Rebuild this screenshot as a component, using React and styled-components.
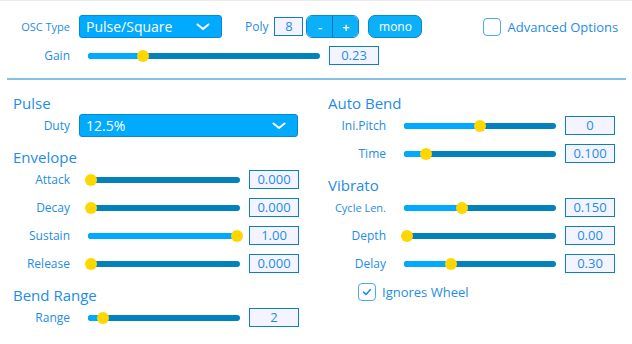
import styled, { createGlobalStyle } from "styled-components";

const GlobalStyle = createGlobalStyle`
  body {
    margin: 0;
    background: #fff;
    font-family: "Open Sans", "Noto Sans", sans-serif;
  }
`;

const BLUE = "#1e8ce8";

const Page = styled.div`
  width: 632px;
  height: 344px;
  box-sizing: border-box;
  border-top: 1px solid #ececec;
  background: #fff;
`;

const Top = styled.div`
  display: flex;
  flex-direction: column;
  gap: 6px;
  padding: 14px 0 0 13px;
`;

const Row = styled.div`
  display: flex;
  align-items: center;
  height: 23px;
  margin-left: ${(p) => p.$indent || 0}px;
`;

const Label = styled.div`
  width: ${(p) => p.$w}px;
  margin-right: ${(p) => p.$gap ?? 18}px;
  flex: none;
  text-align: right;
  font-size: ${(p) => p.$size || 12}px;
  color: ${BLUE};
  white-space: nowrap;
`;

const InlineLabel = styled.span`
  font-size: 12px;
  color: ${BLUE};
  margin: 0 6px 0 ${(p) => p.$left || 0}px;
`;

const Select = styled.div`
  display: flex;
  align-items: center;
  justify-content: space-between;
  width: ${(p) => p.$w}px;
  height: 23px;
  box-sizing: border-box;
  padding: 0 11px 0 6px;
  background: #00aaff;
  border: 1px solid #0b88cc;
  border-radius: 3px;
  color: #fff;
  font-size: 14px;
  flex: none;
`;

const ValueBox = styled.div`
  width: ${(p) => p.$w || 50}px;
  height: 19px;
  box-sizing: border-box;
  margin-left: ${(p) => p.$left ?? 9}px;
  border: 1px solid #0b7fc0;
  background: #f3f4ff;
  color: ${BLUE};
  font-size: 13px;
  line-height: 17px;
  text-align: center;
  flex: none;
`;

const BtnGroup = styled.div`
  display: flex;
  height: 23px;
  box-sizing: border-box;
  margin-left: 3px;
  border: 1px solid #0b88cc;
  border-radius: 6px;
  overflow: hidden;
`;

const GroupBtn = styled.div`
  width: 25px;
  display: flex;
  align-items: center;
  justify-content: center;
  background: #0cb0f8;
  color: #fff;
  font-size: 13px;
  font-weight: 600;
  & + & {
    border-left: 1px solid #0a72b0;
  }
`;

const Pill = styled.div`
  width: 54px;
  height: 23px;
  box-sizing: border-box;
  margin-left: 9px;
  display: flex;
  align-items: center;
  justify-content: center;
  background: #0cb0f8;
  border: 1px solid #0b88cc;
  border-radius: 7px;
  color: #fff;
  font-size: 12px;
`;

const Check = styled.label`
  display: flex;
  align-items: center;
  gap: 6px;
  margin-left: ${(p) => p.$left || 0}px;
  font-size: 13px;
  color: ${BLUE};
`;

const Box = styled.span`
  width: 18px;
  height: 18px;
  box-sizing: border-box;
  border: 1.5px solid #4da6ff;
  border-radius: 4px;
  background: #fff;
  display: flex;
  align-items: center;
  justify-content: center;
`;

const Divider = styled.div`
  height: 2px;
  margin: 11px 6px 0 7px;
  background: #84c0e3;
`;

const Columns = styled.div`
  display: grid;
  grid-template-columns: 315px 1fr;
  padding: 13px 0 0 13px;
`;

const Column = styled.div`
  display: flex;
  flex-direction: column;
  gap: 10px;
`;

const Section = styled.div`
  display: flex;
  flex-direction: column;
  gap: 5px;
`;

const Heading = styled.div`
  height: 20px;
  line-height: 20px;
  margin-bottom: -4px;
  font-size: 15px;
  color: ${BLUE};
`;

const Track = styled.div`
  position: relative;
  width: ${(p) => p.$w}px;
  height: 6px;
  border-radius: 3px;
  background: #0281bd;
  flex: none;
`;

const Fill = styled.div`
  height: 100%;
  border-radius: 3px;
  background: #00aaff;
`;

const Thumb = styled.div`
  position: absolute;
  top: -3px;
  width: 12px;
  height: 12px;
  border-radius: 50%;
  background: #ffd700;
`;

function Slider({ value, width }) {
  const c = 3 + value * (width - 6);
  return (
    <Track $w={width}>
      <Fill style={{ width: c }} />
      <Thumb style={{ left: c - 6 }} />
    </Track>
  );
}

const Chevron = () => (
  <svg width="14" height="8" viewBox="0 0 14 8">
    <path d="M1.5 1.5 L7 6 L12.5 1.5" fill="none" stroke="#fff" strokeWidth="2" strokeLinecap="round" strokeLinejoin="round" />
  </svg>
);

const Tick = () => (
  <svg width="12" height="12" viewBox="0 0 12 12">
    <path d="M2.5 6.2 L5 8.5 L9.5 3.5" fill="none" stroke="#1e8ce8" strokeWidth="1.6" strokeLinecap="round" strokeLinejoin="round" />
  </svg>
);

function ParamRow({ label, value, display, labelW, size }) {
  return (
    <Row>
      <Label $w={labelW} $size={size}>{label}</Label>
      <Slider value={value} width={152} />
      <ValueBox>{display}</ValueBox>
    </Row>
  );
}

const envelope = [
  { label: "Attack", value: 0, display: "0.000" },
  { label: "Decay", value: 0, display: "0.000" },
  { label: "Sustain", value: 1, display: "1.00" },
  { label: "Release", value: 0, display: "0.000" },
];

const autoBend = [
  { label: "Ini.Pitch", value: 0.5, display: "0" },
  { label: "Time", value: 0.13, display: "0.100" },
];

const vibrato = [
  { label: "Cycle Len.", value: 0.377, display: "0.150", size: 11 },
  { label: "Depth", value: 0, display: "0.00" },
  { label: "Delay", value: 0.3, display: "0.30" },
];

export default function App() {
  return (
    <Page>
      <GlobalStyle />
      <Top>
        <Row>
          <Label $w={57} $gap={9} $size={11}>OSC Type</Label>
          <Select $w={143}>
            Pulse/Square
            <Chevron />
          </Select>
          <InlineLabel $left={23}>Poly</InlineLabel>
          <ValueBox $w={29} $left={0}>8</ValueBox>
          <BtnGroup>
            <GroupBtn>-</GroupBtn>
            <GroupBtn>+</GroupBtn>
          </BtnGroup>
          <Pill>mono</Pill>
          <Check $left={61}>
            <Box />
            Advanced Options
          </Check>
        </Row>
        <Row>
          <Label $w={57}>Gain</Label>
          <Slider value={0.23} width={232} />
          <ValueBox>0.23</ValueBox>
        </Row>
      </Top>
      <Divider />
      <Columns>
        <Column>
          <Section>
            <Heading>Pulse</Heading>
            <Row>
              <Label $w={57} $gap={9}>Duty</Label>
              <Select $w={219}>
                12.5%
                <Chevron />
              </Select>
            </Row>
          </Section>
          <Section>
            <Heading>Envelope</Heading>
            {envelope.map((p) => (
              <ParamRow key={p.label} {...p} labelW={57} />
            ))}
          </Section>
          <Section>
            <Heading>Bend Range</Heading>
            <ParamRow label="Range" value={0.08} display="2" labelW={57} />
          </Section>
        </Column>
        <Column>
          <Section>
            <Heading>Auto Bend</Heading>
            {autoBend.map((p) => (
              <ParamRow key={p.label} {...p} labelW={58} />
            ))}
          </Section>
          <Section>
            <Heading>Vibrato</Heading>
            {vibrato.map((p) => (
              <ParamRow key={p.label} {...p} labelW={58} />
            ))}
            <Row $indent={30}>
              <Check>
                <Box>
                  <Tick />
                </Box>
                Ignores Wheel
              </Check>
            </Row>
          </Section>
        </Column>
      </Columns>
    </Page>
  );
}
